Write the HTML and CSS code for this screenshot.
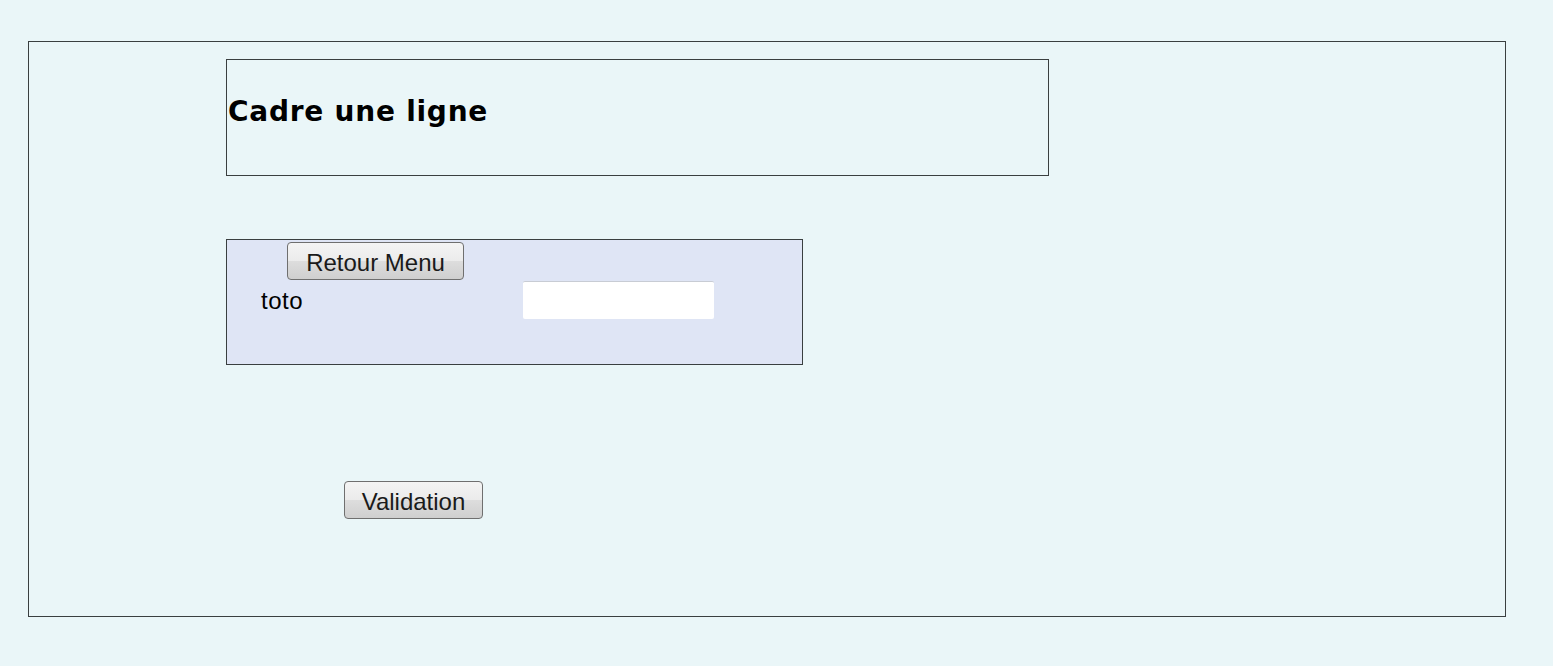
FILE: index.html
```html
<!DOCTYPE html>
<html lang="fr">
<head>
<meta charset="utf-8">
<title>Cadre une ligne</title>
<link rel="stylesheet" href="styles.css">
</head>
<body>
<div class="page">
  <div class="outer">
    <div class="header">
      <h1 class="title">Cadre une ligne</h1>
    </div>
    <div class="panel">
      <button class="btn btn-menu" type="button">Retour Menu</button>
      <div class="row">
        <label class="label" for="toto">toto</label>
        <input class="field" id="toto" type="text">
      </div>
    </div>
    <button class="btn btn-valid" type="button">Validation</button>
  </div>
</div>
</body>
</html>
```

FILE: styles.css
```css
html, body {
  margin: 0;
  padding: 0;
  background: #eaf6f8;
}
.page {
  padding: 41px 0 0 28px;
  font-family: "Liberation Sans", Arial, sans-serif;
}
.outer {
  box-sizing: border-box;
  width: 1478px;
  height: 576px;
  border: 1px solid #3a3f40;
  padding: 17px 0 0 197px;
}
.header {
  box-sizing: border-box;
  width: 823px;
  height: 117px;
  border: 1px solid #3a3f40;
  display: flex;
  align-items: center;
}
.title {
  margin: 0 0 12px 1px;
  font-family: "DejaVu Sans", Verdana, sans-serif;
  font-weight: bold;
  font-size: 28px;
  letter-spacing: 0.75px;
  color: #000;
}
.panel {
  box-sizing: border-box;
  margin-top: 63px;
  width: 577px;
  height: 126px;
  border: 1px solid #3a3f40;
  background: #dfe5f5;
  padding: 2px 0 0 60px;
}
.btn {
  box-sizing: border-box;
  height: 38px;
  border: 1px solid #6f6f6f;
  border-radius: 4px;
  background: linear-gradient(#f4f4f4, #ebebeb 50%, #dddddd 51%, #cfcfcf);
  font-family: "Liberation Sans", Arial, sans-serif;
  font-size: 24px;
  color: #1a1a1a;
  padding: 3px 0 0;
  display: block;
}
.btn-menu {
  width: 177px;
}
.row {
  display: flex;
  align-items: center;
  margin-left: -26px;
  margin-top: 1px;
}
.label {
  width: 262px;
  font-size: 24px;
  letter-spacing: 0.5px;
  color: #000;
  padding-top: 2px;
}
.field {
  box-sizing: border-box;
  width: 191px;
  height: 38px;
  border: none;
  border-top: 1px solid #c8ccd4;
  border-radius: 2px;
  background: #fff;
  margin: 0;
}
.btn-valid {
  width: 139px;
  margin: 116px 0 0 118px;
}
```
